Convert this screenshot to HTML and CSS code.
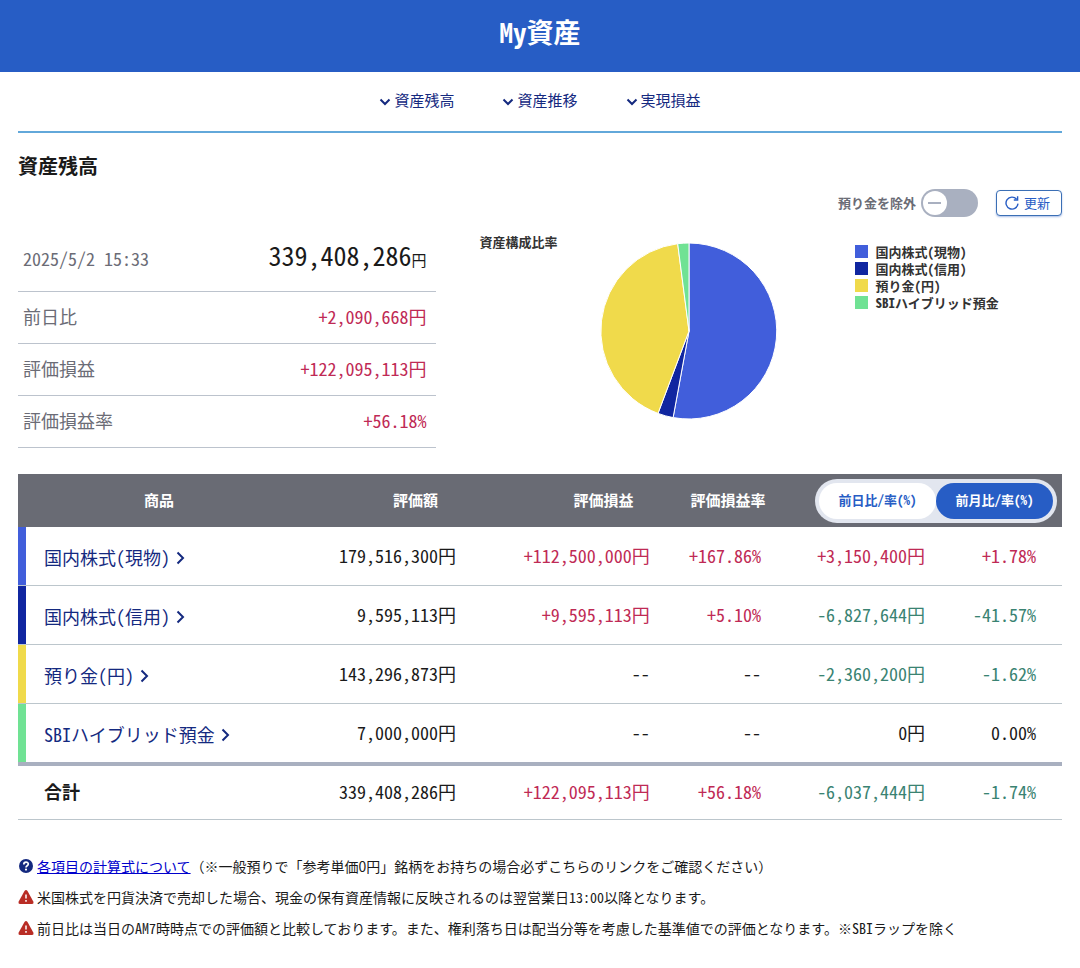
FILE: index.html
```html
<!DOCTYPE html>
<html lang="ja">
<head>
    <meta charset="UTF-8">
    <meta name="viewport" content="width=device-width, initial-scale=1.0">
    <title>My資産</title>
    <link rel="stylesheet" href="styles.css">
</head>
<body>
    <header class="page-header">
        <h1>My資産</h1>
    </header>

    <main class="container">
        <nav class="anchor-nav">
            <a href="#balance"><svg class="chevron-down" viewBox="0 0 12 8"><path d="M1.5 1.5 L6 6 L10.5 1.5"/></svg>資産残高</a>
            <a href="#history"><svg class="chevron-down" viewBox="0 0 12 8"><path d="M1.5 1.5 L6 6 L10.5 1.5"/></svg>資産推移</a>
            <a href="#realized"><svg class="chevron-down" viewBox="0 0 12 8"><path d="M1.5 1.5 L6 6 L10.5 1.5"/></svg>実現損益</a>
        </nav>

        <section id="balance">
            <h2>資産残高</h2>

            <div class="toolbar">
                <label class="switch">
                    <span>預り金を除外</span>
                    <input type="checkbox" role="switch">
                </label>
                <button class="refresh" type="button">
                    <svg viewBox="0 0 16 16"><path d="M12.6 4.2 A6 6 0 1 0 14 8.6"/><path d="M13.6 1.2 V5 H9.8"/></svg>
                    更新
                </button>
            </div>

            <div class="overview">
                <dl class="summary">
                    <div>
                        <dt>2025/5/2 15:33</dt>
                        <dd class="total">339,408,286<small>円</small></dd>
                    </div>
                    <div>
                        <dt>前日比</dt>
                        <dd class="plus">+2,090,668円</dd>
                    </div>
                    <div>
                        <dt>評価損益</dt>
                        <dd class="plus">+122,095,113円</dd>
                    </div>
                    <div>
                        <dt>評価損益率</dt>
                        <dd class="plus">+56.18%</dd>
                    </div>
                </dl>

                <div class="chart">
                    <h3>資産構成比率</h3>
                    <svg class="pie" viewBox="0 0 178 178">
                        <path class="fill-spot" d="M89 89 V1 A88 88 0 1 1 73.1 175.6 Z"/>
                        <path class="fill-margin" d="M89 89 L73.1 175.6 A88 88 0 0 1 58 171.4 Z"/>
                        <path class="fill-cash" d="M89 89 L58 171.4 A88 88 0 0 1 77.7 1.7 Z"/>
                        <path class="fill-hybrid" d="M89 89 L77.7 1.7 A88 88 0 0 1 89 1 Z"/>
                    </svg>
                    <ul class="legend">
                        <li class="spot">国内株式(現物)</li>
                        <li class="margin">国内株式(信用)</li>
                        <li class="cash">預り金(円)</li>
                        <li class="hybrid">SBIハイブリッド預金</li>
                    </ul>
                </div>
            </div>

            <table class="assets">
                <colgroup>
                    <col class="col-name">
                    <col class="col-value">
                    <col class="col-profit">
                    <col class="col-rate">
                    <col class="col-diff">
                    <col class="col-diff-rate">
                </colgroup>
                <thead>
                    <tr>
                        <th>商品</th>
                        <th class="amount">評価額</th>
                        <th class="amount">評価損益</th>
                        <th>評価損益率</th>
                        <th colspan="2" class="period">
                            <div class="segment">
                                <button type="button">前日比/率(%)</button>
                                <button type="button" class="active">前月比/率(%)</button>
                            </div>
                        </th>
                    </tr>
                </thead>
                <tbody>
                    <tr class="spot">
                        <th><a href="#">国内株式(現物)<svg class="chevron-right" viewBox="0 0 9 14"><path d="M1.5 1.5 L7 7 L1.5 12.5"/></svg></a></th>
                        <td>179,516,300円</td>
                        <td class="plus">+112,500,000円</td>
                        <td class="plus">+167.86%</td>
                        <td class="plus">+3,150,400円</td>
                        <td class="plus">+1.78%</td>
                    </tr>
                    <tr class="margin">
                        <th><a href="#">国内株式(信用)<svg class="chevron-right" viewBox="0 0 9 14"><path d="M1.5 1.5 L7 7 L1.5 12.5"/></svg></a></th>
                        <td>9,595,113円</td>
                        <td class="plus">+9,595,113円</td>
                        <td class="plus">+5.10%</td>
                        <td class="minus">-6,827,644円</td>
                        <td class="minus">-41.57%</td>
                    </tr>
                    <tr class="cash">
                        <th><a href="#">預り金(円)<svg class="chevron-right" viewBox="0 0 9 14"><path d="M1.5 1.5 L7 7 L1.5 12.5"/></svg></a></th>
                        <td>143,296,873円</td>
                        <td>--</td>
                        <td>--</td>
                        <td class="minus">-2,360,200円</td>
                        <td class="minus">-1.62%</td>
                    </tr>
                    <tr class="hybrid">
                        <th><a href="#">SBIハイブリッド預金<svg class="chevron-right" viewBox="0 0 9 14"><path d="M1.5 1.5 L7 7 L1.5 12.5"/></svg></a></th>
                        <td>7,000,000円</td>
                        <td>--</td>
                        <td>--</td>
                        <td>0円</td>
                        <td>0.00%</td>
                    </tr>
                </tbody>
                <tfoot>
                    <tr>
                        <th>合計</th>
                        <td>339,408,286円</td>
                        <td class="plus">+122,095,113円</td>
                        <td class="plus">+56.18%</td>
                        <td class="minus">-6,037,444円</td>
                        <td class="minus">-1.74%</td>
                    </tr>
                </tfoot>
            </table>

            <ul class="notes">
                <li class="help">
                    <svg viewBox="0 0 16 16"><circle cx="8" cy="8" r="7" fill="#14297f"/><path d="M5.8 6.4 C5.8 3.3 10.3 3.4 10.3 6.1 C10.3 7.8 8 7.7 8 9.5" fill="none" stroke="#fff" stroke-width="1.7"/><circle cx="8" cy="11.6" r="1.1" fill="#fff"/></svg>
                    <p><a href="#">各項目の計算式について</a>（※一般預りで「参考単価0円」銘柄をお持ちの場合必ずこちらのリンクをご確認ください）</p>
                </li>
                <li>
                    <svg viewBox="0 0 16 16"><path d="M6.5 2 Q8 0 9.5 2 L15.3 12.5 Q16 15 14 15 H2 Q0 15 .7 12.5 Z" fill="#b92d25"/><path d="M8 5.5 V9.5 M8 11 V12.7" stroke="#fff" stroke-width="1.5"/></svg>
                    <p>米国株式を円貨決済で売却した場合、現金の保有資産情報に反映されるのは翌営業日13:00以降となります。</p>
                </li>
                <li>
                    <svg viewBox="0 0 16 16"><path d="M6.5 2 Q8 0 9.5 2 L15.3 12.5 Q16 15 14 15 H2 Q0 15 .7 12.5 Z" fill="#b92d25"/><path d="M8 5.5 V9.5 M8 11 V12.7" stroke="#fff" stroke-width="1.5"/></svg>
                    <p>前日比は当日のAM7時時点での評価額と比較しております。また、権利落ち日は配当分等を考慮した基準値での評価となります。※SBIラップを除く</p>
                </li>
            </ul>
        </section>
    </main>
</body>
</html>
```
FILE: styles.css
```css
* {
    box-sizing: border-box;
}

body {
    margin: 0;
    background-color: #fff;
    color: #1a1a1a;
    font-family: "Noto Sans CJK JP", sans-serif;
    font-size: 18px;
    line-height: 26px;
    /* half-width latin and digits */
    font-feature-settings: "hwid";
}

button,
input {
    font: inherit;
    font-feature-settings: inherit;
}

h1, h2, h3, dl, dd, ul, p {
    margin: 0;
    padding: 0;
}

ul {
    list-style: none;
}

a {
    color: #14297f;
    text-decoration: none;
}

.page-header {
    height: 72px;
    padding-top: 19px;
    background-color: #275dc5;
    color: #fff;
    text-align: center;
}

.page-header h1 {
    font-size: 27px;
    line-height: 26px;
}

.container {
    padding: 0 18px;
}

/* Navigation */
.anchor-nav {
    display: flex;
    justify-content: center;
    gap: 48px;
    padding: 15px 0 18px;
    border-bottom: 2px solid #62a8da;
    font-size: 15px;
}

.anchor-nav a {
    display: flex;
    align-items: center;
    gap: 3px;
}

.chevron-down,
.chevron-right {
    fill: none;
    stroke: #14297f;
    stroke-width: 2;
}

.chevron-down {
    width: 12px;
    height: 8px;
    margin-top: 4px;
}

.chevron-right {
    width: 9px;
    height: 14px;
    margin-top: 2px;
    margin-left: 6px;
}

h2 {
    padding-top: 20px;
    font-size: 20px;
}

/* Toolbar */
.toolbar {
    display: flex;
    justify-content: flex-end;
    align-items: center;
    gap: 18px;
    height: 28px;
    margin-top: 10px;
    font-size: 13px;
}

.switch {
    display: flex;
    align-items: center;
    gap: 5px;
    color: #6b6c76;
    font-weight: bold;
}

.switch input {
    appearance: none;
    display: flex;
    align-items: center;
    width: 57px;
    height: 28px;
    margin: 0;
    padding: 0 2px;
    border-radius: 14px;
    background-color: #a9b0c0;
}

.switch input::before {
    content: "";
    width: 24px;
    height: 24px;
    border-radius: 50%;
    background: linear-gradient(#a9b0c0, #a9b0c0) center / 13px 2px no-repeat #fff;
}

.switch input:checked {
    justify-content: flex-end;
    background-color: #275dc5;
}

.refresh {
    display: flex;
    align-items: center;
    gap: 4px;
    height: 26px;
    padding: 0 11px 0 7px;
    border: 1px solid #3b6fb5;
    border-radius: 4px;
    background-color: #fff;
    box-shadow: 0 1px 2px rgba(39, 93, 197, 0.4);
    color: #275dc5;
    cursor: pointer;
}

.refresh svg {
    width: 16px;
    height: 16px;
    fill: none;
    stroke: #275dc5;
    stroke-width: 1.4;
}

/* Summary and chart */
.overview {
    display: grid;
    grid-template-columns: 2fr 3fr;
    margin-top: 10px;
}

.summary div {
    display: flex;
    justify-content: space-between;
    align-items: center;
    height: 52px;
    padding: 0 9px 3px 5px;
    border-bottom: 1px solid #bcc3cd;
}

.summary div:first-child {
    height: 65px;
}

.summary dt {
    color: #6b6c76;
}

.summary .total {
    font-size: 26px;
}

.summary small {
    font-size: 15px;
}

.plus {
    color: #bf2a55;
}

.minus {
    color: #3a8372;
}

.chart {
    display: flex;
    padding: 2px 0 0 44px;
}

.chart h3 {
    width: 120px;
    font-size: 13px;
    color: #333;
}

.pie {
    flex: none;
    width: 178px;
    height: 178px;
    margin-top: 13px;
    stroke: #fff;
    stroke-width: 1;
}

.fill-spot { fill: #415edb; }
.fill-margin { fill: #1026a0; }
.fill-cash { fill: #f0da4b; }
.fill-hybrid { fill: #70e294; }

.legend {
    margin: 14px 0 0 77px;
    color: #333;
    font-size: 13px;
    font-weight: bold;
    line-height: 17px;
}

.legend li {
    display: flex;
    align-items: center;
    gap: 8px;
    white-space: nowrap;
}

.legend li::before {
    content: "";
    width: 13px;
    height: 13px;
    background-color: var(--asset);
}

.spot { --asset: #415edb; }
.margin { --asset: #1026a0; }
.cash { --asset: #f0da4b; }
.hybrid { --asset: #70e294; }

/* Asset table */
.assets {
    width: 100%;
    margin-top: 26px;
    border-collapse: separate;
    border-spacing: 0;
    table-layout: fixed;
}

.col-name { width: 27%; }
.col-value { width: 21%; }
.col-profit { width: 15%; }
.col-rate { width: 10%; }
.col-diff { width: 16%; }
.col-diff-rate { width: 11%; }

.assets thead th {
    height: 53px;
    padding: 0 0 2px;
    background-color: #696b74;
    color: #fff;
    font-size: 15px;
}

.assets thead .amount {
    padding-left: 12px;
}

.assets thead .period {
    padding: 0 5px 0 0;
}

.segment {
    display: flex;
    width: 242px;
    height: 44px;
    margin-left: auto;
    padding: 4px;
    border-radius: 22px;
    background-color: #e2e6ef;
}

.segment button {
    flex: 1;
    padding: 0 0 2px;
    border: none;
    border-radius: 18px;
    background-color: #fff;
    color: #275dc5;
    font-size: 13px;
    font-weight: bold;
    cursor: pointer;
}

.segment .active {
    background-color: #275dc5;
    color: #fff;
}

.assets td {
    padding: 0 0 2px;
    text-align: right;
    white-space: nowrap;
}

.assets td:nth-child(2) { padding-right: 63px; }
.assets td:nth-child(3) { padding-right: 26px; }
.assets td:nth-child(4) { padding-right: 19px; }
.assets td:nth-child(5) { padding-right: 22px; }
.assets td:nth-child(6) { padding-right: 26px; }

.assets tbody th,
.assets tbody td {
    height: 59px;
    border-bottom: 1px solid #bcc6cc;
}

.assets tbody th,
.assets tfoot th {
    padding: 2px 0 0 26px;
    text-align: left;
}

/* coloured bar at the left of each asset */
.assets tbody th {
    background: linear-gradient(var(--asset), var(--asset)) left / 8px 100% no-repeat;
    font-weight: normal;
}

.assets th a {
    display: flex;
    align-items: center;
}

.assets tbody tr:last-child > * {
    height: 62px;
    border-bottom: 4px solid #a9b0c0;
}

.assets tfoot th,
.assets tfoot td {
    height: 54px;
    padding-top: 0;
    padding-bottom: 4px;
    border-bottom: 1px solid #bcc6cc;
}

/* Notes */
.notes {
    padding: 33px 0 24px;
    font-size: 14px;
}

.notes li {
    display: flex;
    align-items: center;
    gap: 3px;
    margin-bottom: 5px;
}

.notes svg {
    flex: none;
    width: 16px;
    height: 16px;
}

.notes a {
    color: #0000cc;
    text-decoration: underline;
}

.notes .help {
    font-feature-settings: normal;
}
```
